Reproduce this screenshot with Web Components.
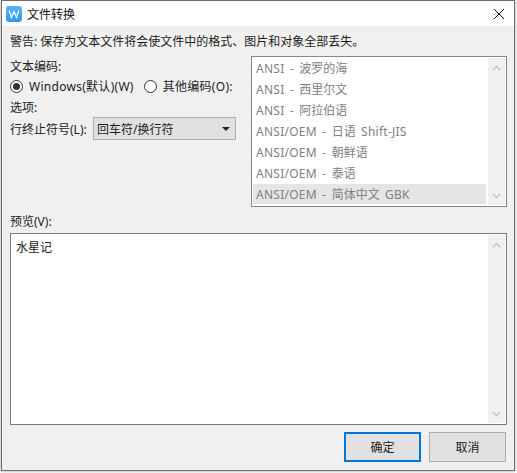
<!DOCTYPE html>
<html lang="zh">
<head>
<meta charset="utf-8">
<title>文件转换</title>
<style>
  html, body { margin: 0; height: 100%; background: #fff; }
</style>
</head>
<body>
<dialog-window titulo="文件转换">
  <div slot="aviso">警告: 保存为文本文件将会使文件中的格式、图片和对象全部丢失。</div>
  <opciones-texto slot="izquierda"></opciones-texto>
  <lista-codificacion slot="derecha"></lista-codificacion>
  <vista-previa slot="preview" texto="水星记"></vista-previa>
  <boton-dialogo slot="botones" primario>确定</boton-dialogo>
  <boton-dialogo slot="botones">取消</boton-dialogo>
</dialog-window>

<script>
const FUENTE = '"Noto Sans", "Noto Sans CJK SC", sans-serif';

class DialogWindow extends HTMLElement {
  constructor() {
    super();
    this.attachShadow({ mode: 'open' });
    const titulo = this.getAttribute('titulo') || '';
    this.shadowRoot.innerHTML = `
      <style>
        :host { display: block; box-sizing: border-box; width: 517px; height: 473px; padding: 0 2px 2px 1px;
          font: 12px ${FUENTE}; color: #1c1c1c; background: #fff; overflow: hidden; }
        .marco { box-sizing: border-box; height: 100%; display: flex; flex-direction: column;
          border: 1px solid #6f6f6f; background: #f0f0f0; box-shadow: 0 0 3px rgba(0,0,0,.4); }
        .titulo { height: 25px; flex: none; background: #fff; display: flex; align-items: center; padding: 0 0 0 4px; gap: 5px; color: #111; }
        .titulo span { flex: 1; }
        .cerrar { width: 30px; height: 25px; display: flex; align-items: center; justify-content: center; }
        .cuerpo { flex: 1; display: flex; flex-direction: column; padding: 0 7px 8px 8px; }
        .aviso { height: 30px; line-height: 32px; flex: none; }
        .medio { display: flex; height: 151px; flex: none; }
        .izq { width: 241px; flex: none; }
        .der { flex: 1; }
        .prev { flex: 1; display: flex; flex-direction: column; margin-top: 5px; }
        .botones { display: flex; justify-content: flex-end; gap: 8px; padding-top: 7px; padding-right: 1px; }
      </style>
      <div class="marco">
        <div class="titulo">
          <svg width="16" height="16" viewBox="0 0 16 16">
            <defs><linearGradient id="g" x1="0" y1="0" x2="0" y2="1"><stop offset="0" stop-color="#55b6fb"/><stop offset="1" stop-color="#2f98f6"/></linearGradient></defs>
            <rect width="16" height="16" rx="3" fill="url(#g)"/>
            <path d="M3.2 4.5 L5.4 11.5 L8 5.8 L10.6 11.5 L12.8 4.5" fill="none" stroke="#fff" stroke-width="1.3"/>
          </svg>
          <span>${titulo}</span>
          <div class="cerrar">
            <svg width="12" height="12" viewBox="0 0 12 12"><path d="M1 1 L11 11 M11 1 L1 11" stroke="#111" stroke-width="1" fill="none"/></svg>
          </div>
        </div>
        <div class="cuerpo">
          <div class="aviso"><slot name="aviso"></slot></div>
          <div class="medio">
            <div class="izq"><slot name="izquierda"></slot></div>
            <div class="der"><slot name="derecha"></slot></div>
          </div>
          <div class="prev"><slot name="preview"></slot></div>
          <div class="botones"><slot name="botones"></slot></div>
        </div>
      </div>`;
  }
}

class RadioOpcion extends HTMLElement {
  constructor() {
    super();
    this.attachShadow({ mode: 'open' });
    const marcado = this.hasAttribute('marcado');
    this.shadowRoot.innerHTML = `
      <style>
        :host { display: inline-flex; align-items: center; gap: 6px; }
        .c { width: 13px; height: 13px; box-sizing: border-box; border: 1px solid #333; border-radius: 50%;
          background: #fff; display: flex; align-items: center; justify-content: center; }
        .p { width: 7px; height: 7px; border-radius: 50%; background: #333; }
      </style>
      <span class="c">${marcado ? '<span class="p"></span>' : ''}</span><slot></slot>`;
  }
}

class OpcionesTexto extends HTMLElement {
  constructor() {
    super();
    this.attachShadow({ mode: 'open' });
    this.shadowRoot.innerHTML = `
      <style>
        :host { display: block; }
        .fila { display: flex; align-items: center; }
        .a { height: 19px; }
        .radios { gap: 10px; height: 22px; }
        .radios radio-opcion { letter-spacing: .28px; }
        .b { height: 20px; }
        .linea { height: 23px; }
        .et { width: 83px; flex: none; }
        .combo { box-sizing: border-box; width: 143px; height: 23px; border: 1px solid #adadad; background: #e1e1e1;
          display: flex; align-items: center; justify-content: space-between; padding: 0 5px 0 3px; }
        .flecha { width: 0; height: 0; border-left: 4px solid transparent; border-right: 4px solid transparent; border-top: 4px solid #222; }
      </style>
      <div class="fila a">文本编码:</div>
      <div class="fila radios">
        <radio-opcion marcado>Windows(默认)(W)</radio-opcion>
        <radio-opcion>其他编码(O):</radio-opcion>
      </div>
      <div class="fila b">选项:</div>
      <div class="fila linea">
        <span class="et">行终止符号(L):</span>
        <div class="combo"><span>回车符/换行符</span><span class="flecha"></span></div>
      </div>`;
  }
}

class BarraScroll extends HTMLElement {
  constructor() {
    super();
    this.attachShadow({ mode: 'open' });
    this.shadowRoot.innerHTML = `
      <style>
        :host { display: flex; flex-direction: column; justify-content: space-between; width: 17px; flex: none;
          background: #f0f0f0; margin: 1px 1px 1px 0; }
        .b { height: 18px; display: flex; align-items: center; justify-content: center; }
        .b.arriba { height: 20px; }
      </style>
      <div class="b arriba"><svg width="9" height="6" viewBox="0 0 9 6"><path d="M1 5 L4.5 1.5 L8 5" fill="none" stroke="#c4c4c4" stroke-width="1.5"/></svg></div>
      <div class="b"><svg width="9" height="6" viewBox="0 0 9 6"><path d="M1 1 L4.5 4.5 L8 1" fill="none" stroke="#c4c4c4" stroke-width="1.5"/></svg></div>`;
  }
}

class ListaCodificacion extends HTMLElement {
  constructor() {
    super();
    this.attachShadow({ mode: 'open' });
    const items = [['ANSI - ', '波罗的海', ''], ['ANSI - ', '西里尔文', ''], ['ANSI - ', '阿拉伯语', ''], ['ANSI/OEM - ', '日语', ' Shift-JIS'],
      ['ANSI/OEM - ', '朝鲜语', ''], ['ANSI/OEM - ', '泰语', ''], ['ANSI/OEM - ', '简体中文', ' GBK']];
    this.shadowRoot.innerHTML = `
      <style>
        :host { display: flex; box-sizing: border-box; height: 151px; border: 1px solid #82878f; background: #fff; color: #808080; }
        ul { flex: 1; margin: 0; padding: 1px 2px 1px 1px; list-style: none; overflow: hidden; }
        li { height: 21px; line-height: 21px; padding-left: 3px; white-space: pre; }
        li.sel { background: #e5e5e5; height: 20px; }
        b { font-weight: normal; letter-spacing: .25px; word-spacing: 2px; }
      </style>
      <ul>${items.map(([a, t, z], i) => `<li class="${i === items.length - 1 ? 'sel' : ''}"><b>${a}</b>${t}<b>${z}</b></li>`).join('')}</ul>
      <barra-scroll></barra-scroll>`;
  }
}

class VistaPrevia extends HTMLElement {
  constructor() {
    super();
    this.attachShadow({ mode: 'open' });
    this.shadowRoot.innerHTML = `
      <style>
        :host { display: flex; flex-direction: column; flex: 1; height: 100%; }
        .et { height: 21px; line-height: 20px; }
        .caja { flex: 1; display: flex; border: 1px solid #7a7a7a; background: #fff; }
        .txt { flex: 1; padding: 3px 5px; line-height: 21px; color: #1c1c1c; }
      </style>
      <div class="et">预览(V):</div>
      <div class="caja"><div class="txt">${this.getAttribute('texto') || ''}</div><barra-scroll></barra-scroll></div>`;
  }
}

class BotonDialogo extends HTMLElement {
  constructor() {
    super();
    this.attachShadow({ mode: 'open' });
    this.shadowRoot.innerHTML = `
      <style>
        :host { display: flex; align-items: center; justify-content: center; box-sizing: border-box; width: 77px; height: 30px;
          border: 1px solid #adadad; background: #e1e1e1; }
        :host([primario]) { border: 2px solid #0078d7; }
      </style>
      <slot></slot>`;
  }
}

customElements.define('dialog-window', DialogWindow);
customElements.define('radio-opcion', RadioOpcion);
customElements.define('opciones-texto', OpcionesTexto);
customElements.define('barra-scroll', BarraScroll);
customElements.define('lista-codificacion', ListaCodificacion);
customElements.define('vista-previa', VistaPrevia);
customElements.define('boton-dialogo', BotonDialogo);
</script>
</body>
</html>
